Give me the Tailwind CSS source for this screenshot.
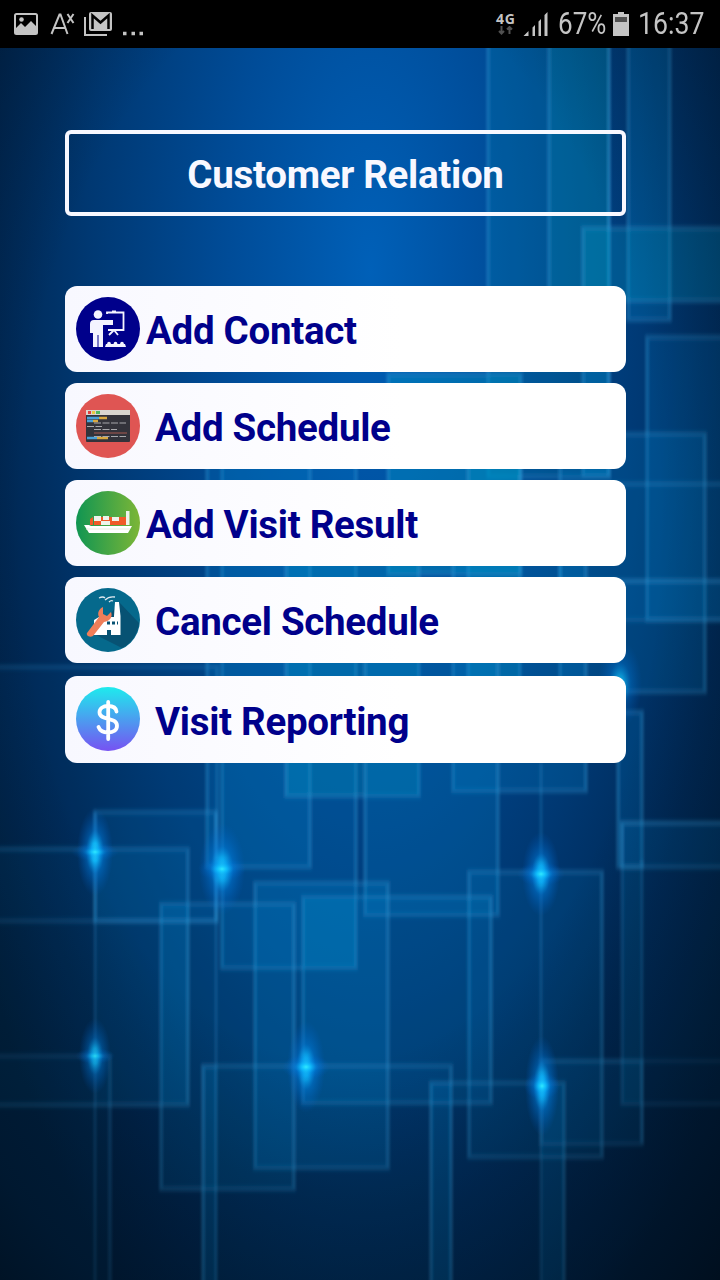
<!DOCTYPE html>
<html lang="en">
  <head>
    <meta charset="UTF-8" />
    <meta name="viewport" content="width=device-width, initial-scale=1.0" />
    <title>Customer Relation</title>
    <script src="https://cdn.jsdelivr.net/npm/@tailwindcss/browser@4"></script>
  </head>
  <body class="bg-black font-['Roboto',sans-serif]">
    <div class="relative isolate flex h-[1280px] w-[720px] flex-col overflow-hidden">

      <!-- Background -->
      <svg class="absolute inset-0 -z-10" width="720" height="1280" viewBox="0 0 720 1280">
        <defs>
          <radialGradient id="base" gradientUnits="userSpaceOnUse" cx="0" cy="0" r="1" gradientTransform="translate(370 270) scale(470 1200)">
            <stop offset="0" stop-color="#0060b8" />
            <stop offset="0.3" stop-color="#004c98" />
            <stop offset="0.6" stop-color="#003872" />
            <stop offset="0.8" stop-color="#002854" />
            <stop offset="1" stop-color="#001d3c" />
          </radialGradient>
          <radialGradient id="shade" gradientUnits="userSpaceOnUse" cx="0" cy="0" r="1" gradientTransform="translate(340 520) scale(640 1080)">
            <stop offset="0.5" stop-color="#000a14" stop-opacity="0" />
            <stop offset="0.8" stop-color="#000a14" stop-opacity="0.4" />
            <stop offset="1" stop-color="#000a14" stop-opacity="0.95" />
          </radialGradient>
          <radialGradient id="glow">
            <stop offset="0" stop-color="#30e8ff" />
            <stop offset="0.2" stop-color="#10c0ff" stop-opacity="0.9" />
            <stop offset="0.5" stop-color="#0080e8" stop-opacity="0.42" />
            <stop offset="1" stop-color="#0060d0" stop-opacity="0" />
          </radialGradient>
          <filter id="soft" x="-5%" y="-5%" width="110%" height="110%"><feGaussianBlur stdDeviation="1.2 2" /></filter>
        </defs>
        <rect width="720" height="1280" fill="url(#base)" />
        <g filter="url(#soft)" fill="#0084cc" fill-opacity="0.2" stroke="#38a0e0" stroke-opacity="0.28" stroke-width="4">
          <rect x="488" y="20" width="121" height="457" fill="#0090b4" />
          <rect x="549" y="20" width="60" height="320" fill="#0090b4" />
          <rect x="628" y="20" width="42" height="300" fill-opacity="0.28" />
          <rect x="583" y="228" width="160" height="73" fill="#0094c0" fill-opacity="0.3" />
          <rect x="583" y="301" width="26" height="175" fill-opacity="0.3" />
          <rect x="647" y="337" width="100" height="283" fill-opacity="0.16" />
          <rect x="560" y="434" width="145" height="258" fill-opacity="0.18" />
          <rect x="560" y="484" width="200" height="97" fill-opacity="0.04" />
          <rect x="560" y="581" width="200" height="39" fill-opacity="0.16" stroke-opacity="0.2" />
          <rect x="388" y="374" width="133" height="200" fill="#0098c8" fill-opacity="0.38" />
          <rect x="468" y="440" width="52" height="240" fill="#0098c8" fill-opacity="0.32" />
          <rect x="222" y="460" width="134" height="508" />
          <rect x="207" y="440" width="103" height="427" />
          <rect x="286" y="540" width="133" height="256" fill="#0098c8" fill-opacity="0.3" />
          <rect x="453" y="540" width="133" height="251" fill-opacity="0.24" />
          <rect x="365" y="640" width="133" height="275" fill-opacity="0.24" />
          <rect x="618" y="712" width="24" height="155" />
          <rect x="622" y="823" width="120" height="44" fill-opacity="0.12" />
          <rect x="622" y="823" width="120" height="281" fill-opacity="0.04" stroke-opacity="0.18" />
          <rect x="622" y="867" width="20" height="237" fill-opacity="0.15" stroke="none" />
          <rect x="469" y="872" width="133" height="285" fill-opacity="0.13" />
          <rect x="303" y="897" width="188" height="206" fill-opacity="0.18" />
          <rect x="303" y="899" width="53" height="69" fill="#0098c8" stroke="none" />
          <rect x="255" y="883" width="133" height="285" fill-opacity="0.22" />
          <rect x="161" y="904" width="133" height="285" fill-opacity="0.14" />
          <rect x="161" y="904" width="28" height="200" fill-opacity="0.15" stroke="none" />
          <rect x="95" y="812" width="121" height="109" fill-opacity="0.12" />
          <rect x="95" y="849" width="93" height="256" fill-opacity="0.1" stroke="none" />
          <rect x="-20" y="849" width="208" height="256" fill-opacity="0.06" />
          <rect x="-20" y="667" width="237" height="254" fill-opacity="0.04" stroke-opacity="0.22" />
          <rect x="203" y="1066" width="248" height="250" fill-opacity="0.05" />
          <rect x="203" y="1066" width="13" height="250" stroke-opacity="0.08" />
          <rect x="431" y="1083" width="133" height="240" fill-opacity="0.04" />
          <rect x="431" y="1083" width="20" height="240" stroke-opacity="0.06" />
          <rect x="541" y="1083" width="23" height="240" stroke="none" />
          <rect x="541" y="1061" width="101" height="83" fill-opacity="0.12" stroke-opacity="0.2" />
          <path d="M541 1061H730" fill="none" stroke-opacity="0.15" />
          <rect x="-20" y="1056" width="130" height="260" fill-opacity="0.05" stroke-opacity="0.2" />
          <path d="M95 812V1290M541 763V1290M216 812V1290M642 860V1143" fill="none" stroke-width="3" stroke-opacity="0.22" />
        </g>
        <rect width="720" height="1280" fill="url(#shade)" />
        <g fill="url(#glow)">
          <ellipse cx="95" cy="852" rx="18" ry="44" />
          <ellipse cx="95" cy="852" rx="24" ry="9" opacity="0.6" />
          <ellipse cx="222" cy="869" rx="23" ry="46" />
          <ellipse cx="222" cy="869" rx="24" ry="12" opacity="0.7" />
          <ellipse cx="541" cy="874" rx="19" ry="42" />
          <ellipse cx="541" cy="874" rx="24" ry="12" opacity="0.7" />
          <ellipse cx="95" cy="1056" rx="16" ry="38" opacity="0.8" />
          <ellipse cx="95" cy="1056" rx="20" ry="8" opacity="0.5" />
          <ellipse cx="306" cy="1067" rx="19" ry="46" />
          <ellipse cx="306" cy="1067" rx="24" ry="13" opacity="0.8" />
          <ellipse cx="542" cy="1086" rx="17" ry="50" />
          <ellipse cx="542" cy="1086" rx="18" ry="14" opacity="0.7" />
          <ellipse cx="620" cy="684" rx="22" ry="44" opacity="0.7" />
        </g>
      </svg>

      <!-- Status bar -->
      <header class="flex h-12 shrink-0 items-center justify-between bg-black text-[#c4c4c4]">
        <svg width="160" height="48" viewBox="0 0 160 48" fill="none" stroke="#c4c4c4">
          <rect x="15" y="14" width="22" height="20" rx="1.5" stroke-width="2" />
          <path d="M15 29l6-6 4 4 6-6 6 6v7H15z" fill="#c4c4c4" stroke="none" />
          <circle cx="21.500" cy="19.500" r="2.300" fill="#c4c4c4" stroke="none" />
          <path d="M51.500 34L59.500 14.500h1L67.500 34M54 28h11" stroke-width="2" />
          <path d="M67.500 14l6 9M73.500 14l-6 9" stroke-width="2" />
          <path d="M85 17v18h22" stroke-width="2" />
          <rect x="89" y="12" width="23" height="19" rx="2" fill="#c4c4c4" stroke="none" />
          <path d="M92.500 29V15.500l8 7 8-7V29" stroke="#000" stroke-width="2.500" />
          <path d="M123 33.500h3.500M131.500 33.500h3.500M139.500 33.500h3.500" stroke-width="3.500" />
        </svg>
        <div class="flex h-12 w-[224px] items-center">
          <div class="flex w-[27px] flex-col">
            <span class="font-['Noto_Sans'] text-sm leading-[14px] font-bold tracking-wider">4G</span>
            <svg width="20" height="10" viewBox="0 0 20 10" fill="none" stroke="#505050" stroke-width="2">
              <path d="M5.500 0v7M3 5l2.500 2.500L8 5M13.500 8V1M11 3.500L13.500 1 16 3.500" />
            </svg>
          </div>
          <svg width="35" height="48" viewBox="0 0 35 48" fill="#c4c4c4">
            <path d="M-2 36l5-5v5zM7 27.500l2.500-2.500V36H7zM13 21.500l2.500-2.500V36H13zM19 15l3-3v24h-3z" transform="translate(2.500)" />
          </svg>
          <div class="w-[55px] text-[31px]"><span class="inline-block origin-left scale-x-[0.84] pt-1.5 leading-9">67%</span></div>
          <svg width="18" height="48" viewBox="0 0 18 48">
            <path d="M5 12h6v2h5v22H0V14h5z" fill="#c4c4c4" />
            <path d="M2 17h12v5H2z" fill="#505050" />
          </svg>
          <div class="ml-[7px] w-[70px] text-[31px]"><span class="inline-block origin-left scale-x-[0.86] pt-1.5 leading-9">16:37</span></div>
        </div>
      </header>

      <main class="ml-[65px] flex w-[561px] flex-col pt-[82px] text-[38.500px] leading-none font-bold tracking-[-0.3px] text-[#00008b]">
        <h1 class="flex h-[86px] items-center justify-center rounded-md border-4 border-[#f8f8ff] pt-1 text-[#f8f8ff]">Customer Relation</h1>

        <nav class="mt-[70px] flex flex-col gap-[11px]">
          <button class="flex h-[86px] items-center rounded-xl bg-gradient-to-r from-[#f8f8ff] to-white to-60% pl-[11px]">
            <svg width="64" height="64" viewBox="0 0 64 64">
              <circle cx="32" cy="32" r="32" fill="#00008b" />
              <g fill="#f4f4ff">
                <circle cx="22" cy="17.500" r="4.300" />
                <path d="M14 27q0-4 4-4h19v5H27v22h-4.500V38h-1v12H17V36h-3z" />
                <path d="M29 50l1-3h19l1 3z" />
                <circle cx="33" cy="46.500" r="1.800" />
                <circle cx="39.500" cy="46.500" r="1.800" />
                <circle cx="46" cy="46.500" r="1.800" />
                <path d="M31 17v-1.500h16.500V33H32M36 14.500h4M38 33l-5 5M38 33l4 5" fill="none" stroke="#f4f4ff" stroke-width="1.800" />
              </g>
            </svg>
            <span class="ml-[6px] pt-1">Add Contact</span>
          </button>

          <button class="flex h-[86px] items-center rounded-xl bg-gradient-to-r from-[#f8f8ff] to-white to-60% pl-[11px]">
            <svg width="64" height="64" viewBox="0 0 64 64">
              <circle cx="32" cy="32" r="32" fill="#df5553" />
              <rect x="10" y="16" width="44" height="32" rx="1" fill="#33333b" />
              <path d="M10 16h44v5H10z" fill="#d9d6cf" />
              <path d="M12 18.500h3" stroke="#e04040" stroke-width="3" />
              <path d="M16 18.500h3" stroke="#e8c840" stroke-width="3" />
              <path d="M20 18.500h4" stroke="#50b860" stroke-width="3" />
              <g fill="none" stroke-width="2.500">
                <path d="M11 24h12M11 27h6M11 44h10" stroke="#4aa0d8" />
                <path d="M23 24h8M17 27h5M21 44h11" stroke="#d8a840" />
              </g>
              <path d="M18 29h32M11 32.500h15M18 35.500h23M18 42.500h32" stroke="#a8a8ac" fill="none" stroke-dasharray="7 1.500" />
              <path d="M18 39h33" stroke="#a85b50" fill="none" />
            </svg>
            <span class="ml-[15px] pt-1">Add Schedule</span>
          </button>

          <button class="flex h-[86px] items-center rounded-xl bg-gradient-to-r from-[#f8f8ff] to-white to-60% pl-[11px]">
            <svg width="64" height="64" viewBox="0 0 64 64">
              <linearGradient id="sea"><stop stop-color="#109552" /><stop offset="1" stop-color="#7cb637" /></linearGradient>
              <circle cx="32" cy="32" r="32" fill="url(#sea)" />
              <path d="M14 34v-6l3-2v8zM18 26h35v8H18z" fill="#f05a28" />
              <path d="M18 25h7v5h-7zM27 25h6v4h-6zM36 26h7v4h-7zM25 30h9v4h-9zM50 20h3.500v14H50z" fill="#eef3ea" />
              <path d="M8 34h5l2 1h41l-4 7H13z" fill="#fff" />
              <path d="M10 38h44" stroke="#e5ece0" />
            </svg>
            <span class="ml-[6px] pt-1">Add Visit Result</span>
          </button>

          <button class="flex h-[86px] items-center rounded-xl bg-gradient-to-r from-[#f8f8ff] to-white to-60% pl-[11px]">
            <svg width="64" height="64" viewBox="0 0 64 64">
              <circle cx="32" cy="32" r="32" fill="#05698c" />
              <path d="M43 14l20 21A32 32 0 0 1 46 60L20 47z" fill="#075273" />
              <path d="M18 47V32l5-3h15v-1l1-14h4l1.500 14V47H35v-5h-4v5z" fill="#fff" />
              <path d="M31 35h11" stroke="#075273" stroke-width="3" stroke-dasharray="3 2" />
              <path d="M23 10q4-2 6 0M29 12q4-4 10-3M33 14q2-2 4-1" fill="none" stroke="#dce8ef" stroke-width="1.300" />
              <path d="M11 45l12-16c-2-4 0-8 4-10v7l4 2 4-4c2 5-1 9-7 10L17 48c-4 2-7-1-6-3z" fill="#ef7e59" />
            </svg>
            <span class="ml-[15px] pt-1">Cancel Schedule</span>
          </button>

          <button class="mt-0.5 flex h-[87px] items-center rounded-xl bg-gradient-to-r from-[#f8f8ff] to-white to-60% pl-[11px]">
            <svg class="-mt-px" width="64" height="64" viewBox="0 0 64 64">
              <linearGradient id="coin" x2="0" y2="1"><stop stop-color="#1eebed" /><stop offset="1" stop-color="#7752f2" /></linearGradient>
              <circle cx="32" cy="32" r="32" fill="url(#coin)" />
              <path d="M40.500 24.500C40 20.500 36.500 19 32 19c-5 0-8.500 2.500-8.500 6.300 0 9 17.500 4 17.500 13.500 0 4.200-3.500 6.700-9 6.700-4.500 0-8-1.700-9.500-5.500M32.200 15v37" fill="none" stroke="#fff" stroke-width="3.800" stroke-linecap="round" />
            </svg>
            <span class="ml-[15px] pt-1.5">Visit Reporting</span>
          </button>
        </nav>
      </main>
    </div>
  </body>
</html>
